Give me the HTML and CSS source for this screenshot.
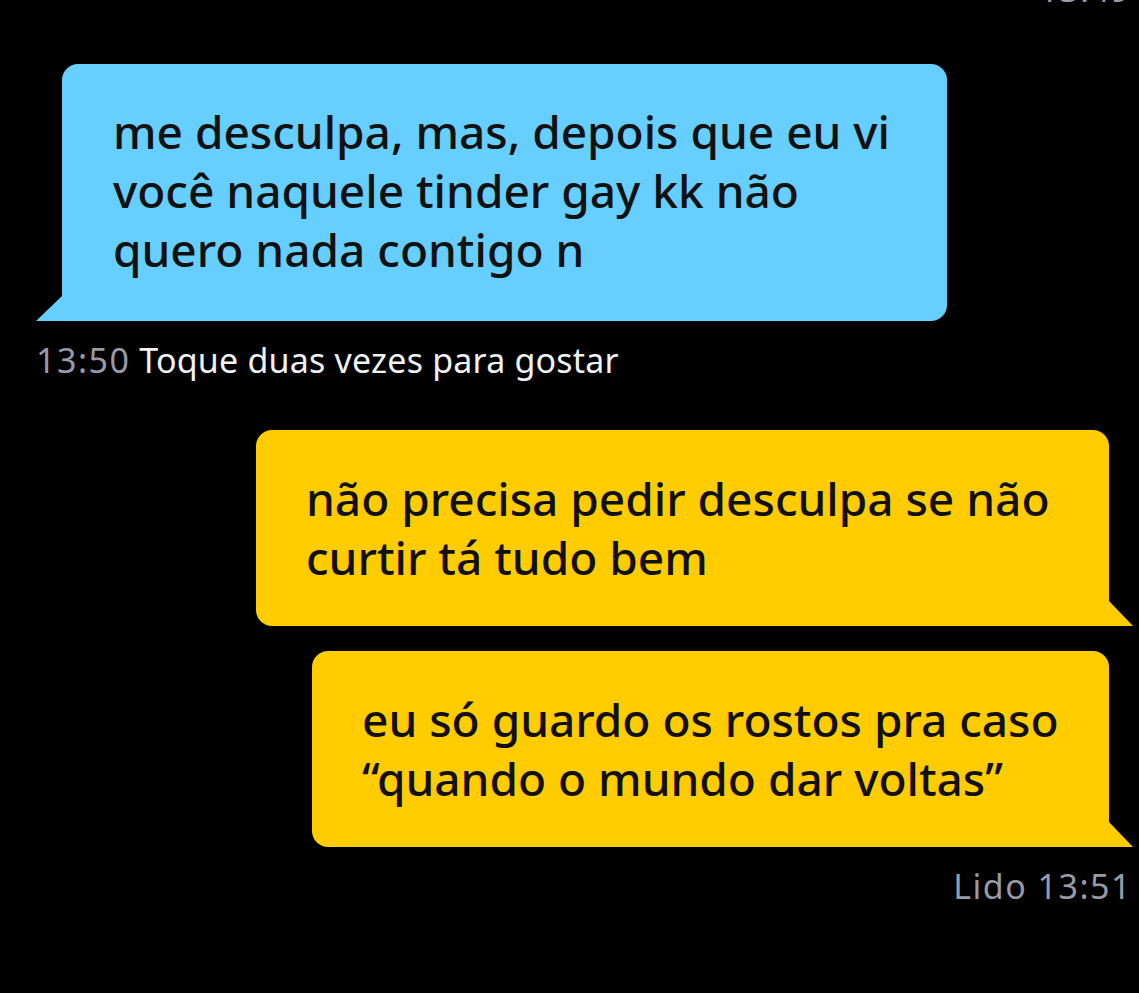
FILE: index.html
```html
<!DOCTYPE html>
<html lang="pt">
<head>
    <meta charset="UTF-8">
    <title>Chat</title>
    <link rel="stylesheet" href="styles.css">
</head>
<body>
    <div class="chat">
        <div class="stamp top-stamp">13:49</div>

        <div class="bubble theirs">
            me desculpa, mas, depois que eu vi<br>
            você naquele tinder gay kk não<br>
            quero nada contigo n
        </div>
        <div class="meta left">
            <span class="time">13:50</span> <span class="hint">Toque duas vezes para gostar</span>
        </div>

        <div class="mine-group">
            <div class="bubble mine first">
                não precisa pedir desculpa se não<br>
                curtir tá tudo bem
            </div>
            <div class="bubble mine second">
                eu só guardo os rostos pra caso<br>
                “quando o mundo dar voltas”
            </div>
        </div>
        <div class="meta right">
            <span class="time">Lido 13:51</span>
        </div>
    </div>
</body>
</html>
```

FILE: styles.css
```css
body {
    margin: 0;
    background-color: #000;
    font-family: "Noto Sans", "Open Sans", sans-serif;
    overflow: hidden;
}

.chat {
    display: flex;
    flex-direction: column;
    height: 993px;
}

.stamp {
    color: #9a9aa6;
    font-size: 34px;
    letter-spacing: 1px;
}

.top-stamp {
    align-self: flex-end;
    margin-top: -34px;
    margin-right: 8px;
    height: 98px;
    line-height: 46px;
}

.bubble {
    position: relative;
    font-size: 46px;
    font-weight: 500;
    line-height: 59px;
    color: #111;
    border-radius: 16px;
    box-sizing: border-box;
    white-space: nowrap;
}

.bubble::after {
    content: "";
    position: absolute;
    bottom: 0;
    width: 26px;
    height: 25px;
}

.theirs {
    background-color: #66cfff;
    margin-left: 62px;
    width: 885px;
    height: 257px;
    padding: 38px 20px 0 51px;
    border-bottom-left-radius: 0;
}

.theirs::after {
    left: -26px;
    background-color: #66cfff;
    clip-path: polygon(100% 0, 100% 100%, 0 100%);
}

.meta {
    font-size: 34px;
    line-height: 40px;
}

.meta.left {
    margin: 19px 0 0 36px;
}

.meta .time {
    color: #9a9aa6;
    letter-spacing: 1.5px;
}

.meta .hint {
    color: #f2f2f2;
    letter-spacing: 0.2px;
}

.mine-group {
    display: flex;
    flex-direction: column;
    align-items: flex-end;
    gap: 25px;
    margin: 50px 30px 0 0;
}

.mine {
    background-color: #ffcc00;
    height: 196px;
    padding: 39px 20px 0 50px;
    border-bottom-right-radius: 0;
}

.mine::after {
    right: -24px;
    width: 24px;
    background-color: #ffcc00;
    clip-path: polygon(0 0, 100% 100%, 0 100%);
}

.mine.first {
    width: 853px;
}

.mine.second {
    width: 797px;
}

.meta.right {
    align-self: flex-end;
    margin: 19px 7px 0 0;
}
```
